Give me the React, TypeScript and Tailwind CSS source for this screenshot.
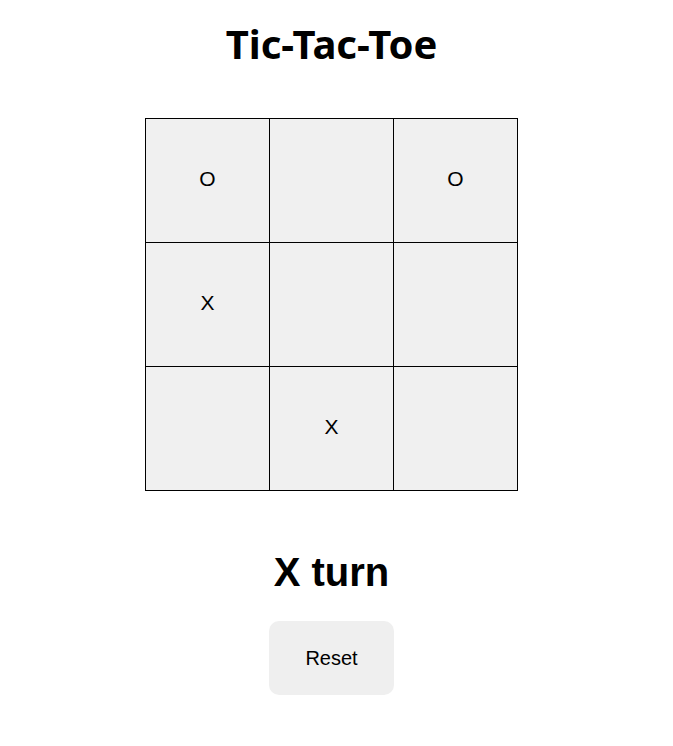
import React from 'react';

const board: string[] = ['O', '', 'O', 'X', '', '', '', 'X', ''];

const App: React.FC = () => {
  return (
    <div className="w-[663px] flex flex-col items-center bg-white text-black font-['Liberation_Sans',Arial,sans-serif]">
      <h1 className="mt-[20px] text-[40px] leading-[48px] font-bold font-['Noto_Sans',sans-serif]">Tic-Tac-Toe</h1>

      {/* Board */}
      <div className="mt-[50px] grid grid-cols-[repeat(3,124px)] border-l border-t border-black">
        {board.map((cell, i) => (
          <div
            key={i}
            className="h-[124px] pb-[3px] flex items-center justify-center bg-[#f0f0f0] border-r border-b border-black text-[21px]"
          >
            {cell}
          </div>
        ))}
      </div>

      <h2 className="mt-[57px] text-[40px] leading-[48px] font-bold">X turn</h2>

      <button className="mt-[25px] w-[125px] h-[74px] rounded-[10px] bg-[#efefef] text-[20px]">
        Reset
      </button>
    </div>
  );
};

export default App;
